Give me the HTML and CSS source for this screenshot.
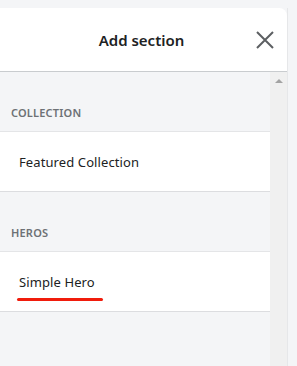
FILE: index.html
```html
<!DOCTYPE html>
<html lang="en">
<head>
    <meta charset="UTF-8">
    <meta name="viewport" content="width=device-width, initial-scale=1.0">
    <title>Add section</title>
    <link rel="stylesheet" href="styles.css">
</head>
<body>
    <div class="page">
        <div class="panel">
            <div class="panel-header">
                <h1>Add section</h1>
                <button class="close" aria-label="Close">
                    <svg width="18" height="18" viewBox="0 0 18 18">
                        <path d="M1 1 L17 17 M17 1 L1 17" stroke="#5c5f62" stroke-width="2" fill="none"/>
                    </svg>
                </button>
            </div>
            <div class="panel-body">
                <div class="list">
                    <div class="group-label">COLLECTION</div>
                    <div class="item">Featured Collection</div>
                    <div class="group-label">HEROS</div>
                    <div class="item"><span class="marked">Simple Hero</span></div>
                </div>
                <div class="scrollbar">
                    <div class="arrow-up"></div>
                </div>
            </div>
        </div>
        <div class="side"></div>
    </div>
</body>
</html>
```

FILE: styles.css
```css
html, body {
    height: 100%;
}
body {
    margin: 0;
    background-color: #f4f5f7;
    font-family: "Noto Sans", "Open Sans", sans-serif;
    color: #202223;
    overflow: hidden;
}
.page {
    display: flex;
    height: 100%;
    padding-top: 8px;
    box-sizing: border-box;
}
.panel {
    width: 287px;
    display: flex;
    flex-direction: column;
    background: #f4f5f7;
    border-top-right-radius: 8px;
    overflow: hidden;
    flex-shrink: 0;
}
.side {
    flex: 1;
    border-left: 1px solid #e6e7e9;
    background: #f4f5f7;
}
.panel-header {
    height: 63px;
    background: white;
    border-bottom: 1px solid #c9cccf;
    display: flex;
    align-items: center;
    justify-content: center;
    position: relative;
}
.panel-header h1 {
    margin: 0;
    font-size: 15px;
    font-weight: 600;
    color: #202223;
    padding-right: 4px;
}
.close {
    position: absolute;
    right: 13px;
    top: 23px;
    background: none;
    border: none;
    padding: 0;
    width: 18px;
    height: 18px;
    cursor: pointer;
}
.panel-body {
    flex: 1;
    display: flex;
}
.list {
    flex: 1;
}
.scrollbar {
    width: 17px;
    background: #f0f0f0;
    display: flex;
    justify-content: center;
    padding-top: 7px;
    box-sizing: border-box;
}
.arrow-up {
    width: 0;
    height: 0;
    border-left: 4px solid transparent;
    border-right: 4px solid transparent;
    border-bottom: 4px solid #a3a3a3;
}
.group-label {
    padding: 33px 11px 10px;
    line-height: 16px;
    font-size: 11px;
    font-weight: 600;
    letter-spacing: 0.2px;
    color: #6d7175;
}
.item {
    background: white;
    border-top: 1px solid #e4e5e7;
    border-bottom: 1px solid #dcdde0;
    height: 59px;
    display: flex;
    align-items: center;
    padding-left: 19px;
    font-size: 13px;
    letter-spacing: 0.1px;
}
.marked {
    position: relative;
}
.marked::after {
    content: "";
    position: absolute;
    left: -2px;
    right: -8px;
    top: 25px;
    height: 3px;
    border-radius: 2px;
    background: #f01c0c;
}
```
